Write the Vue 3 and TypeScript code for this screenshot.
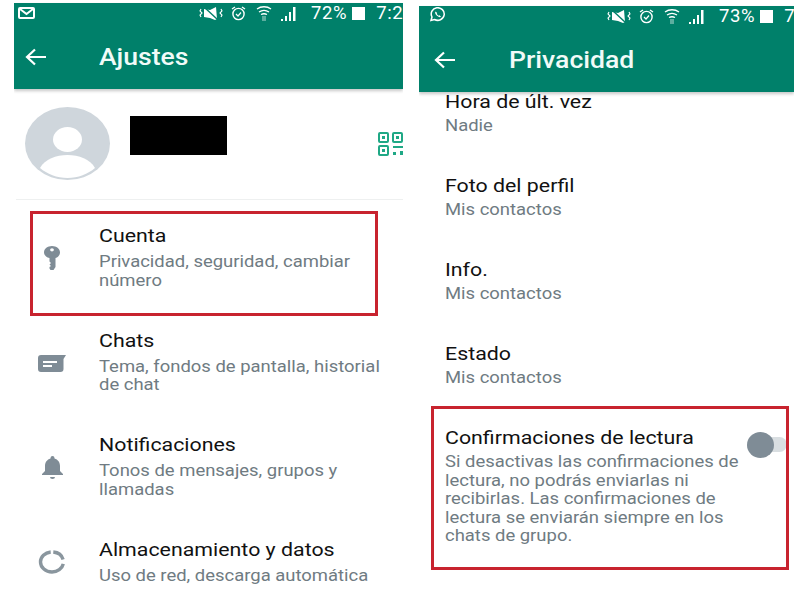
<script setup lang="ts">
interface SettingRow {
  title: string;
  lines: string[];
  icon: 'key' | 'chat' | 'bell' | 'storage';
  marked?: boolean;
}

interface PrivacyRow {
  title: string;
  value: string;
}

const settings: SettingRow[] = [
  { title: 'Cuenta', lines: ['Privacidad, seguridad, cambiar', 'número'], icon: 'key', marked: true },
  { title: 'Chats', lines: ['Tema, fondos de pantalla, historial', 'de chat'], icon: 'chat' },
  { title: 'Notificaciones', lines: ['Tonos de mensajes, grupos y', 'llamadas'], icon: 'bell' },
  { title: 'Almacenamiento y datos', lines: ['Uso de red, descarga automática'], icon: 'storage' },
];

const privacy: PrivacyRow[] = [
  { title: 'Hora de últ. vez', value: 'Nadie' },
  { title: 'Foto del perfil', value: 'Mis contactos' },
  { title: 'Info.', value: 'Mis contactos' },
  { title: 'Estado', value: 'Mis contactos' },
];

const readReceipts: string[] = [
  'Si desactivas las confirmaciones de',
  'lectura, no podrás enviarlas ni',
  'recibirlas. Las confirmaciones de',
  'lectura se enviarán siempre en los',
  'chats de grupo.',
];
</script>

<template>
  <div class="page">
    <section class="screen screen-left">
      <header class="appbar">
        <div class="status">
          <svg class="notif" width="17" height="12" viewBox="0 0 17 12">
            <rect x="1" y="1" width="15" height="10" rx="1" fill="none" stroke="#fff" stroke-width="2" />
            <path d="M2 2l6.500 5L15 2" fill="none" stroke="#fff" stroke-width="2" />
          </svg>
          <div class="status-right">
            <svg class="i-mute" width="24" height="15" viewBox="0 0 24 15">
              <path d="M5 3l6 1 6-3 1 12-2 1-5-2-6-1z" fill="#fff" />
              <path d="M4 0l15 14" stroke="#00806a" stroke-width="1.400" />
              <path d="M2 3l-1 2 2 2-2 2 1 2M22 3l1 2-2 2 2 2-1 2" fill="none" stroke="#fff" stroke-width="1.100" />
            </svg>
            <svg class="i-alarm" width="15" height="15" viewBox="0 0 15 15">
              <circle cx="7.500" cy="8" r="5.600" fill="none" stroke="#fff" stroke-width="1.400" />
              <path d="M5 8l2 2 3-3.500" fill="none" stroke="#fff" stroke-width="1.200" />
              <path d="M1 3l3-2M14 3l-3-2" stroke="#fff" stroke-width="1.400" />
            </svg>
            <svg class="i-wifi" width="16" height="15" viewBox="0 0 16 15">
              <path d="M1 3c4-3 10-3 14 0M3 6c3-2 7-2 10 0M5 8.500c2-1 4-1 6 0" fill="none" stroke="#fff" stroke-width="1.300" />
              <path d="M6.500 10h1v5h-1zM8.500 10h1v5h-1z" fill="#b8dcd4" />
            </svg>
            <svg class="i-signal" width="16" height="15" viewBox="0 0 16 15">
              <path d="M0 13h2v2H0zM4 10h2v5H4zM8 6h2v9H8zM12 1h2.500v14H12z" fill="#fff" />
            </svg>
            <span class="status-text pct">72%</span>
            <span class="battery"></span>
            <span class="status-text time">7:2</span>
          </div>
        </div>
        <div class="toolbar">
          <svg class="back" width="22" height="18" viewBox="0 0 22 18">
            <path d="M21 9H2M10 1.500L2 9l8 7.500" fill="none" stroke="#fff" stroke-width="2.200" />
          </svg>
          <h1 class="bar-title">Ajustes</h1>
        </div>
      </header>

      <div class="profile">
        <svg class="avatar" width="85" height="73" viewBox="0 0 85 73">
          <ellipse cx="42.500" cy="36.500" rx="42.500" ry="36.500" fill="#cfd6dc" />
          <ellipse cx="42.500" cy="32.500" rx="14.500" ry="12.500" fill="#fff" />
          <path d="M15 61c5-9 16-13 27.500-13S65 52 70 61c-7 6-17 10-27.500 10S22 67 15 61z" fill="#fff" />
        </svg>
        <div class="redacted"></div>
        <svg class="qr" width="26" height="24" viewBox="0 0 26 24">
          <g fill="none" stroke="#1fa885" stroke-width="2">
            <rect x="1" y="1" width="9" height="9" rx="1" />
            <rect x="15" y="1" width="9" height="9" rx="1" />
            <rect x="1" y="14" width="9" height="9" rx="1" />
          </g>
          <g fill="#1fa885">
            <rect x="4" y="4" width="3" height="3" />
            <rect x="18" y="4" width="3" height="3" />
            <rect x="4" y="17" width="3" height="3" />
            <rect x="15" y="14" width="10" height="2" />
            <rect x="15" y="20" width="3" height="3" />
            <rect x="22" y="19" width="3" height="4" />
          </g>
        </svg>
      </div>

      <ul class="settings">
        <li v-for="row in settings" :key="row.title" class="setting" :class="{ marked: row.marked }">
          <span class="setting-icon">
            <svg v-if="row.icon === 'key'" width="16" height="24" viewBox="0 0 16 24">
              <path
                fill-rule="evenodd"
                d="M8 0c4.400 0 8 2.800 8 6.300 0 2.700-1.700 4.800-4.500 5.800V21l-2 3h-3L5.500 22.500V21l1.500-1-1.500-1.500L7 17l-1.500-1.500v-3.400C2 11.100 0 9 0 6.300 0 2.800 3.600 0 8 0zm0 2.200a1.900 1.600 0 1 0 0 3.200 1.900 1.600 0 0 0 0-3.200z"
                fill="#7f8c96"
              />
            </svg>
            <svg v-else-if="row.icon === 'chat'" width="28" height="18" viewBox="0 0 28 18">
              <path d="M3 1h25l-2.500 4v10a3 3 0 0 1-3 3H3a3 3 0 0 1-3-3V4a3 3 0 0 1 3-3z" fill="#7f8c96" />
              <path d="M5 7h14v2H5zM5 11h9v2H5z" fill="#fff" />
            </svg>
            <svg v-else-if="row.icon === 'bell'" width="21" height="23" viewBox="0 0 21 23">
              <path
                d="M10.500 0a2 2 0 0 1 2 2v.500c3.500 1 5.500 4 5.500 7.500v5l3 3v1H0v-1l3-3v-5c0-3.500 2-6.500 5.500-7.500V2a2 2 0 0 1 2-2zM8 21h5a2.500 2 0 0 1-5 0z"
                fill="#7f8c96"
              />
            </svg>
            <svg v-else width="28" height="24" viewBox="0 0 28 24">
              <ellipse
                cx="14"
                cy="12"
                rx="11.500"
                ry="10"
                fill="none"
                stroke="#8a969e"
                stroke-width="3.400"
                pathLength="100"
                stroke-dasharray="70 4 19 7"
                stroke-dashoffset="-3"
              />
            </svg>
          </span>
          <div class="setting-text">
            <div class="row-title">{{ row.title }}</div>
            <div v-for="line in row.lines" :key="line" class="row-sub">{{ line }}</div>
          </div>
        </li>
      </ul>
    </section>

    <section class="screen screen-right">
      <header class="appbar">
        <div class="status">
          <svg class="notif" width="18" height="15" viewBox="0 0 18 15">
            <path d="M2 13.500l1-3.500a6.500 6.300 0 1 1 2.500 2.500z" fill="none" stroke="#fff" stroke-width="1.500" />
            <path d="M6.500 4.500c-1 1 0 3 1.500 4.300s3 2 4 1l-1.500-1.500-1 .500-1.800-1.800.500-1z" fill="#fff" />
          </svg>
          <div class="status-right">
            <svg class="i-mute" width="24" height="15" viewBox="0 0 24 15">
              <path d="M5 3l6 1 6-3 1 12-2 1-5-2-6-1z" fill="#fff" />
              <path d="M4 0l15 14" stroke="#00806a" stroke-width="1.400" />
              <path d="M2 3l-1 2 2 2-2 2 1 2M22 3l1 2-2 2 2 2-1 2" fill="none" stroke="#fff" stroke-width="1.100" />
            </svg>
            <svg class="i-alarm" width="15" height="15" viewBox="0 0 15 15">
              <circle cx="7.500" cy="8" r="5.600" fill="none" stroke="#fff" stroke-width="1.400" />
              <path d="M5 8l2 2 3-3.500" fill="none" stroke="#fff" stroke-width="1.200" />
              <path d="M1 3l3-2M14 3l-3-2" stroke="#fff" stroke-width="1.400" />
            </svg>
            <svg class="i-wifi" width="16" height="15" viewBox="0 0 16 15">
              <path d="M1 3c4-3 10-3 14 0M3 6c3-2 7-2 10 0M5 8.500c2-1 4-1 6 0" fill="none" stroke="#fff" stroke-width="1.300" />
              <path d="M6.500 10h1v5h-1zM8.500 10h1v5h-1z" fill="#b8dcd4" />
            </svg>
            <svg class="i-signal" width="16" height="15" viewBox="0 0 16 15">
              <path d="M0 13h2v2H0zM4 10h2v5H4zM8 6h2v9H8zM12 1h2.500v14H12z" fill="#fff" />
            </svg>
            <span class="status-text pct">73%</span>
            <span class="battery"></span>
            <span class="status-text time">7</span>
          </div>
        </div>
        <div class="toolbar">
          <svg class="back" width="22" height="18" viewBox="0 0 22 18">
            <path d="M21 9H2M10 1.500L2 9l8 7.500" fill="none" stroke="#fff" stroke-width="2.200" />
          </svg>
          <h1 class="bar-title">Privacidad</h1>
        </div>
      </header>

      <ul class="privacy">
        <li v-for="row in privacy" :key="row.title" class="privacy-row">
          <div class="row-title">{{ row.title }}</div>
          <div class="row-sub">{{ row.value }}</div>
        </li>
        <li class="receipts">
          <div class="receipts-text">
            <div class="row-title">Confirmaciones de lectura</div>
            <div v-for="line in readReceipts" :key="line" class="row-sub">{{ line }}</div>
          </div>
          <div class="toggle"><span class="knob"></span></div>
        </li>
      </ul>
    </section>
  </div>
</template>

<style>
html,
body {
  margin: 0;
  background: #fff;
  overflow: hidden;
}
</style>

<style scoped>
.page {
  display: flex;
  width: 806px;
  height: 590px;
  overflow: hidden;
  background: #fff;
  font-family: Roboto, "Liberation Sans", sans-serif;
}

.screen {
  flex: none;
  overflow: hidden;
  height: 590px;
  box-sizing: border-box;
}

.screen-left {
  width: 389px;
  margin-left: 14px;
  padding-top: 3px;
}

.screen-right {
  width: 375px;
  margin-left: 16px;
  padding-top: 6px;
}

.appbar {
  background: #00806a;
  height: 86px;
  box-shadow: 0 2px 3px rgba(0, 0, 0, 0.22);
  position: relative;
  z-index: 1;
}

.status {
  display: flex;
  align-items: flex-start;
  height: 22px;
  white-space: nowrap;
}

.notif {
  flex: none;
  margin-left: 4px;
  margin-top: 4px;
}

.status-right {
  flex: none;
  display: flex;
  align-items: center;
  margin-left: 164px;
  height: 20px;
}

.status-right svg {
  flex: none;
}

.screen-right .notif {
  margin-left: 10px;
  margin-top: 1px;
}

.screen-right .status-right {
  margin-left: 160px;
}

.i-alarm {
  margin-left: 8px;
}

.i-wifi {
  margin-left: 10px;
}

.i-signal {
  margin-left: 9px;
}

.status-text {
  color: #fff;
  font-size: 18.500px;
  letter-spacing: 0.600px;
  line-height: 20px;
}

.pct {
  margin-left: 14px;
}

.battery {
  flex: none;
  width: 13px;
  height: 13px;
  background: #fff;
  margin-left: 5px;
}

.time {
  margin-left: 11px;
}

.toolbar {
  display: flex;
  align-items: center;
  height: 64px;
}

.back {
  margin-left: 11px;
  flex: none;
}

.bar-title {
  margin: 0 0 0 52px;
  color: #f1fbf8;
  font-size: 23px;
  font-weight: 500;
  transform: scaleX(1.155);
  transform-origin: left center;
}

.screen-right .back {
  margin-left: 15px;
}

.screen-right .bar-title {
  margin-left: 53px;
}

.profile {
  display: flex;
  align-items: flex-start;
  height: 110px;
  margin-left: 2px;
  border-bottom: 1px solid #eef0f0;
}

.avatar {
  margin: 18px 0 0 9px;
  flex: none;
}

.redacted {
  width: 97px;
  height: 39px;
  background: #000;
  margin: 27px 0 0 20px;
  flex: none;
}

.qr {
  margin: 43px 0 0 151px;
  flex: none;
}

.settings,
.privacy {
  list-style: none;
  margin: 0;
  padding: 0;
}

.settings {
  padding-top: 11px;
}

.setting {
  display: flex;
  align-items: center;
  position: relative;
  padding: 15px 0 11.500px;
  margin-bottom: 14px;
}

.setting.marked::after {
  content: "";
  position: absolute;
  left: 16px;
  top: 0;
  width: 348px;
  height: 105px;
  box-sizing: border-box;
  border: 3px solid #c8232f;
  pointer-events: none;
}

.setting-icon {
  flex: none;
  width: 76px;
  display: flex;
  justify-content: center;
}

.setting-text {
  margin-left: 9px;
}

/* the source screenshot is stretched sideways, the scale brings the text to its widths */
.row-title {
  color: #111;
  font-size: 18px;
  line-height: 20px;
  white-space: nowrap;
  transform: scaleX(1.186);
  transform-origin: left center;
}

.row-sub {
  color: #6f7b82;
  font-size: 16.500px;
  line-height: 18.500px;
  white-space: nowrap;
  transform: scaleX(1.118);
  transform-origin: left center;
}

.setting .row-title {
  margin-bottom: 7px;
}

.privacy-row {
  height: 84px;
  box-sizing: border-box;
  padding-left: 26px;
}

.privacy-row .row-title {
  margin-bottom: 5px;
}

.receipts {
  display: flex;
  align-items: flex-start;
  position: relative;
  padding-left: 26px;
}

.receipts::after {
  content: "";
  position: absolute;
  left: 12px;
  top: -22px;
  width: 358px;
  height: 164px;
  box-sizing: border-box;
  border: 3px solid #c8232f;
  pointer-events: none;
}

.receipts-text .row-title {
  margin-bottom: 5px;
}

.toggle {
  flex: none;
  width: 40px;
  height: 15px;
  margin: 9px 7px 0 auto;
  border-radius: 8px;
  background: #d9dee1;
  position: relative;
}

.knob {
  position: absolute;
  left: 0;
  top: -5.500px;
  width: 27px;
  height: 26px;
  border-radius: 50%;
  background: #7f8c96;
}
</style>
